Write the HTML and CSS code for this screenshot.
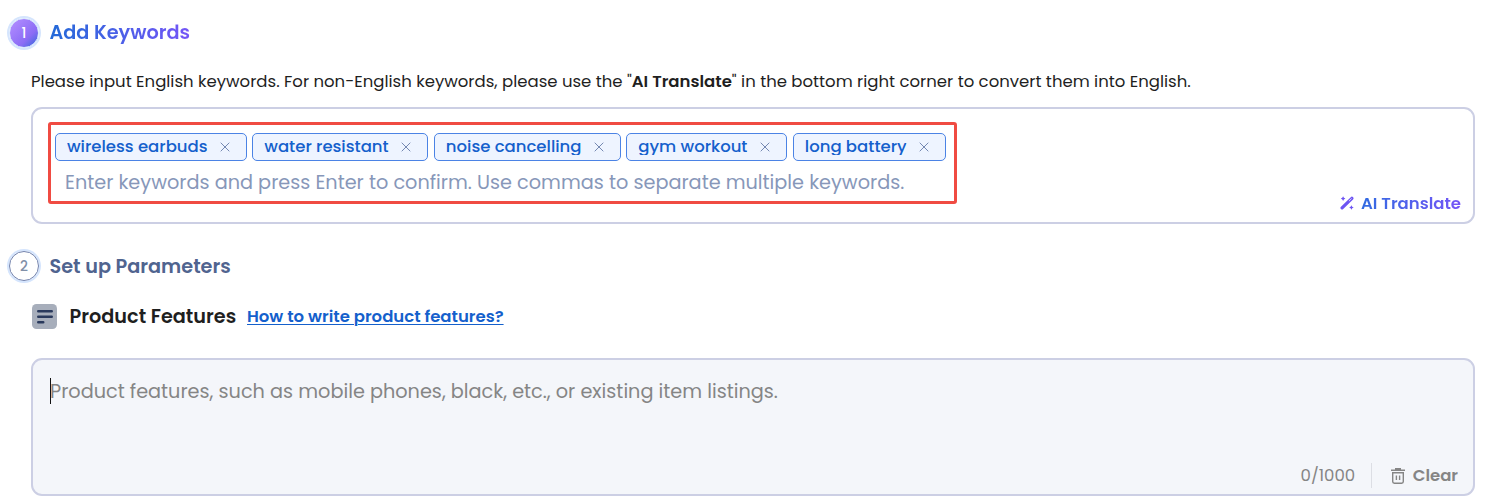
FILE: index.html
```html
<!DOCTYPE html>
<html lang="en">
<head>
    <meta charset="UTF-8">
    <meta name="viewport" content="width=device-width, initial-scale=1.0">
    <title>Listing Builder</title>
    <link rel="stylesheet" href="styles.css">
</head>
<body>
    <!-- Step 1 -->
    <section class="step">
        <div class="step-header">
            <span class="step-number active">1</span>
            <h2 class="step-title active"><span>Add Keywords</span></h2>
        </div>
        <p class="hint">Please input English keywords. For non-English keywords, please use the "<strong>AI Translate</strong>" in the bottom right corner to convert them into English.</p>

        <div class="keyword-box">
            <div class="highlight">
                <div class="tags">
                    <span class="tag wireless"><span class="tag-text">wireless earbuds</span><svg class="close" viewBox="0 0 10 10"><path d="M.7.7l8.6 8.6M9.3.7L.7 9.3"/></svg></span>
                    <span class="tag water"><span class="tag-text">water resistant</span><svg class="close" viewBox="0 0 10 10"><path d="M.7.7l8.6 8.6M9.3.7L.7 9.3"/></svg></span>
                    <span class="tag noise"><span class="tag-text">noise cancelling</span><svg class="close" viewBox="0 0 10 10"><path d="M.7.7l8.6 8.6M9.3.7L.7 9.3"/></svg></span>
                    <span class="tag gym"><span class="tag-text">gym workout</span><svg class="close" viewBox="0 0 10 10"><path d="M.7.7l8.6 8.6M9.3.7L.7 9.3"/></svg></span>
                    <span class="tag battery"><span class="tag-text">long battery</span><svg class="close" viewBox="0 0 10 10"><path d="M.7.7l8.6 8.6M9.3.7L.7 9.3"/></svg></span>
                </div>
                <div class="keyword-input">Enter keywords and press Enter to confirm. Use commas to separate multiple keywords.</div>
            </div>
            <div class="translate">
                <svg class="wand" viewBox="0 0 14 14">
                    <path class="stick" d="M2.1 11.9L11.9 2.3"/>
                    <path class="tip" d="M8.9 5.2l2.7-2.7"/>
                    <path class="spark" d="M3.1.3l.8 1.5 1.5.8-1.5.8-.8 1.5-.8-1.5-1.5-.8 1.5-.8zM11.4 9.2l.8 1.5 1.5.8-1.5.8-.8 1.5-.8-1.5-1.5-.8 1.5-.8z"/>
                </svg>
                <span class="translate-text">AI Translate</span>
            </div>
        </div>
    </section>

    <!-- Step 2 -->
    <section class="step">
        <div class="step-header second">
            <span class="step-number">2</span>
            <h2 class="step-title"><span>Set up Parameters</span></h2>
        </div>
        <div class="feature-header">
            <svg class="feature-icon" viewBox="0 0 25 25">
                <rect width="25" height="25" rx="4.5" fill="#a7aebb"/>
                <path d="M6.3 7.3h13.4M6.3 12.8h13.4M6.3 18.2h4.9" stroke="#29395c" stroke-width="2.6" stroke-linecap="round"/>
            </svg>
            <h3>Product Features</h3>
            <a href="#">How to write product features?</a>
        </div>

        <div class="feature-box">
            <div class="feature-input"><i class="caret"></i><span>Product features, such as mobile phones, black, etc., or existing item listings.</span></div>
            <div class="feature-footer">
                <span class="count">0/1000</span>
                <span class="divider"></span>
                <svg class="trash" viewBox="0 0 14 16">
                    <path d="M0 2.3h14M4 .7h6M1.7 4.7v8.8q0 1.7 1.7 1.7h7.2q1.7 0 1.7-1.7V4.7zM5.4 7.6v4.4M8.6 7.6v4.4"/>
                </svg>
                <span class="clear">Clear</span>
            </div>
        </div>
    </section>
</body>
</html>
```
FILE: styles.css
```css
* {
    box-sizing: border-box;
}

body {
    margin: 0;
    height: 504px;
    overflow: hidden;
    background: #fff;
    color: #1f1f1f;
    font-family: Poppins, Inter, sans-serif;
    font-feature-settings: "cv11";
    font-size: 16.5px;
    white-space: nowrap;
}

h2, h3, p {
    margin: 0;
}

.step-header {
    display: flex;
    align-items: center;
    gap: 10.5px;
    height: 34px;
    margin: 16px 0 0 9px;
}

.step-header.second {
    margin-top: 25px;
}

.step-number {
    display: flex;
    align-items: center;
    justify-content: center;
    width: 30px;
    height: 30px;
    padding-top: 2px;
    border: 1px solid #7383ad;
    border-radius: 50%;
    box-shadow: 0 0 0 2px #d5e5fd;
    color: #8190a8;
    font-size: 13.75px;
    font-weight: 500;
}

.step-number.active {
    border: 1px solid #d5e5fd;
    background: linear-gradient(135deg, #b18cff 10%, #8b6cf5 65%, #3568dc 95%) border-box;
    color: #fff;
}

.step-title {
    color: #50648f;
    font-size: 19.25px;
    font-weight: 600;
    line-height: 30px;
}

.second .step-title {
    padding-top: 1px;
}

.step-title.active span {
    background: linear-gradient(90deg, #236ad8, #7455f7);
    -webkit-background-clip: text;
    background-clip: text;
    color: transparent;
}

.hint {
    margin: 20px 0 0 31px;
    font-size: 16.52px;
    line-height: 24px;
}

.hint strong {
    font-weight: 600;
}

.keyword-box {
    display: flex;
    flex-direction: column;
    align-items: flex-start;
    width: 1444px;
    height: 117px;
    margin: 13px 0 0 31px;
    padding: 13px 12px 0 15px;
    border: 2px solid #cccfe4;
    border-radius: 11px;
}

.highlight {
    width: 909px;
    height: 82px;
    padding: 8px 0 0 4px;
    border: 3px solid #f04b42;
    border-radius: 3px;
}

.tags {
    display: flex;
    gap: 5.5px;
}

.tag {
    display: flex;
    align-items: center;
    justify-content: space-between;
    height: 28px;
    padding: 0 16px 0 11px;
    border: 1px solid #4b83e5;
    border-radius: 5px;
    background: #eef4ff;
    color: #1460cc;
    font-weight: 500;
}

.tag-text {
    align-self: flex-start;
    line-height: 26px;
    clip-path: inset(0 0 5px);
}

.wireless { width: 191.8px; }
.water { width: 176px; }
.noise { width: 187px; }
.gym { width: 161px; }
.battery { width: 153px; }

.close {
    width: 10px;
    height: 10px;
    fill: none;
    stroke: #7588b2;
    stroke-width: 1;
}

.keyword-input {
    padding-left: 10px;
    color: #8797b9;
    font-size: 19.25px;
    line-height: 43px;
}

.translate {
    display: flex;
    align-items: center;
    align-self: flex-end;
    gap: 7px;
    height: 24px;
    margin-top: -13px;
}

.wand {
    width: 14px;
    height: 14px;
}

.stick {
    stroke: #6d54f3;
    stroke-width: 3.2;
    stroke-linecap: round;
}

.tip {
    stroke: #d5cdfc;
    stroke-width: 1;
}

.spark {
    fill: #6d54f3;
}

.translate-text {
    background: linear-gradient(90deg, #316be1, #7455f7);
    -webkit-background-clip: text;
    background-clip: text;
    color: transparent;
    font-weight: 600;
}

.feature-header {
    display: flex;
    align-items: center;
    height: 30px;
    margin: 18px 0 0 32px;
}

.feature-icon {
    width: 25px;
    height: 25px;
}

.feature-header h3 {
    width: 177.5px;
    margin-left: 12.5px;
    font-size: 19.25px;
    font-weight: 600;
}

.feature-header a {
    color: #1460cc;
    font-weight: 600;
    text-underline-offset: 2px;
    text-decoration-thickness: 1px;
}

.feature-box {
    display: flex;
    flex-direction: column;
    justify-content: space-between;
    width: 1444px;
    height: 138px;
    margin: 27px 0 0 31px;
    padding: 17px 15px 6px 17px;
    border: 2px solid #cccfe4;
    border-radius: 11px;
    background: #f4f6fa;
    color: #858585;
}

.feature-input {
    display: flex;
    align-items: center;
    height: 28px;
    font-size: 19.25px;
}

.caret {
    width: 1px;
    height: 26px;
    margin-right: -1px;
    background: #111;
}

.feature-footer {
    display: flex;
    align-items: center;
    justify-content: flex-end;
    height: 26px;
}

.divider {
    width: 1px;
    height: 25px;
    margin: 0 19px 0 15.5px;
    background: #dcdee4;
}

.trash {
    width: 14px;
    height: 16px;
    margin: 1px 8px 0 0;
    fill: none;
    stroke: #858585;
    stroke-width: 1.4;
}

.clear {
    font-weight: 600;
}
```
